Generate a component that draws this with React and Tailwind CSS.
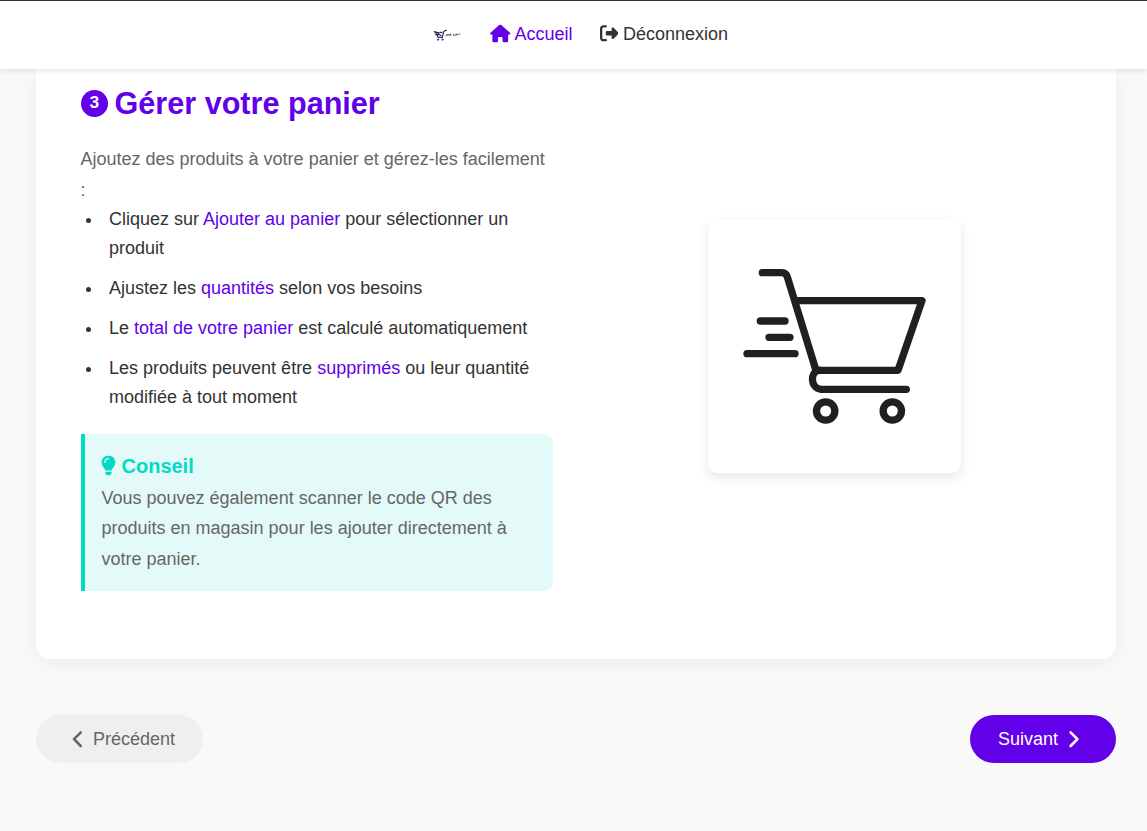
import { FaHouse, FaRightFromBracket, FaLightbulb } from 'react-icons/fa6';

function Logo() {
  return (
    <svg className="h-[13px] w-[28px]" viewBox="0 0 84 39" fill="none" stroke="#2b2757" strokeLinecap="round" strokeLinejoin="round">
      <path d="M4 8 L10 9 L15 25 H28 L32 8 Q34 4 40 4" strokeWidth="3.5" />
      <path d="M6 11 H17 M8 17 H20 M21 10 H27 M17 14 L24 20" strokeWidth="3.5" />
      <circle cx="15" cy="32" r="2" strokeWidth="2.5" />
      <circle cx="28" cy="32" r="2" strokeWidth="2.5" />
      <path d="M39 21 L42 15 L44 20 L47 15 L49 20 L53 14 L54 20 M63 14 Q59 16 62 20 L65 19 M69 14 Q66 17 69 20 L72 15 Q73 21 76 15 L81 15" strokeWidth="2" />
    </svg>
  );
}

function Cart() {
  return (
    <svg className="block size-full" viewBox="24 30 759 759" fill="none" stroke="#231f20" strokeWidth="22" strokeLinecap="round" strokeLinejoin="round">
      <path d="M187 188 H246 Q258 188 262 201 L348 481 H594 L666 272 H290" />
      <path d="M356 481 C330 486 330 534 363 538 H619" />
      <path d="M181 333 H255 M207 382 H270 M141 431 H285" />
      <circle cx="377" cy="603" r="27.5" />
      <circle cx="577" cy="603" r="27.5" />
    </svg>
  );
}

function Chevron({ d }) {
  return (
    <svg className="h-[18px] w-[13px]" viewBox="0 0 13 18" fill="none" stroke="currentColor" strokeWidth="2.6" strokeLinecap="round" strokeLinejoin="round">
      <path d={d} />
    </svg>
  );
}

function Mark({ children }) {
  return <span className="text-[#6200ea]">{children}</span>;
}

function Item({ children }) {
  return (
    <li className="flex">
      <span className="ml-[5px] mt-[13px] mr-[18px] size-[5px] shrink-0 rounded-full bg-[#333]" />
      <span>{children}</span>
    </li>
  );
}

export default function App() {
  return (
    <div className="flex h-[831px] flex-col overflow-hidden bg-[#f9f9f9] font-['Liberation_Sans',Arial,sans-serif] text-[18px] text-[#333]">
      <header className="relative z-10 flex h-[69px] shrink-0 items-center border-t border-[#333] bg-white pl-[433px] leading-[29px] shadow-[0_2px_5px_rgba(0,0,0,0.1)]">
        <Logo />
        <nav className="flex pl-[29px] pb-[2px]">
          <a className="flex w-[109.5px] items-center gap-[4px] text-[#6200ea]">
            <FaHouse className="h-[18px] w-[20.5px] -translate-y-[0.5px]" />
            Accueil
          </a>
          <a className="flex items-center gap-[5px]">
            <FaRightFromBracket className="size-[18.5px] -translate-y-px" />
            Déconnexion
          </a>
        </nav>
      </header>

      <main className="ml-[36px] w-[1080px]">
        <section className="grid h-[590px] grid-cols-[472px_472px] justify-between rounded-b-[14px] bg-white px-[45px] shadow-[0_5px_20px_rgba(0,0,0,0.05)]">
          <div className="pt-[8px]">
            <h2 className="flex h-[52px] items-center gap-[6.5px] text-[30.6px] font-bold text-[#6200ea]">
              <span className="flex size-[27px] items-center justify-center rounded-full bg-[#6200ea] font-[Roboto,sans-serif] text-[17px] text-white">3</span>
              <span className="pt-px">Gérer votre panier</span>
            </h2>
            <p className="-ml-[0.5px] pt-[15px] leading-[30.6px] text-[#666]">Ajoutez des produits à votre panier et gérez-les facilement :</p>
            <ul className="flex flex-col gap-[11px] leading-[29px]">
              <Item>Cliquez sur <Mark>Ajouter au panier</Mark> pour sélectionner un produit</Item>
              <Item>Ajustez les <Mark>quantités</Mark> selon vos besoins</Item>
              <Item>Le <Mark>total de votre panier</Mark> est calculé automatiquement</Item>
              <Item>Les produits peuvent être <Mark>supprimés</Mark> ou leur quantité modifiée à tout moment</Item>
            </ul>
            <aside className="mt-[21.8px] h-[157px] rounded-r-[9px] border-l-4 border-[#03dac6] bg-[#e4faf8] px-[16.5px] pt-[16px]">
              <h3 className="flex h-[33px] items-center gap-[5.5px] text-[20px] font-bold text-[#03dac6]">
                <FaLightbulb className="-ml-[0.5px] h-[20px] w-[15px] -translate-y-[0.5px]" />
                Conseil
              </h3>
              <p className="leading-[30.4px] text-[#666]">Vous pouvez également scanner le code QR des produits en magasin pour les ajouter directement à votre panier.</p>
            </aside>
          </div>
          <div className="flex pl-[109px] pt-[151px]">
            <div className="size-[253px] rounded-[9px] bg-white shadow-[0_4px_12px_rgba(0,0,0,0.1)]">
              <Cart />
            </div>
          </div>
        </section>

        <div className="flex justify-between pt-[56px]">
          <button className="flex h-[48px] w-[167px] items-center gap-[9px] rounded-full bg-[#efefef] pl-[35px] text-[#666]">
            <Chevron d="M9.8 2.4 L3 9.2 L9.8 16" />
            Précédent
          </button>
          <button className="flex h-[48px] w-[146px] items-center gap-[9px] rounded-full bg-[#6200ea] pl-[28px] text-white">
            Suivant
            <Chevron d="M3.6 2.4 L10.4 9.2 L3.6 16" />
          </button>
        </div>
      </main>
    </div>
  );
}
